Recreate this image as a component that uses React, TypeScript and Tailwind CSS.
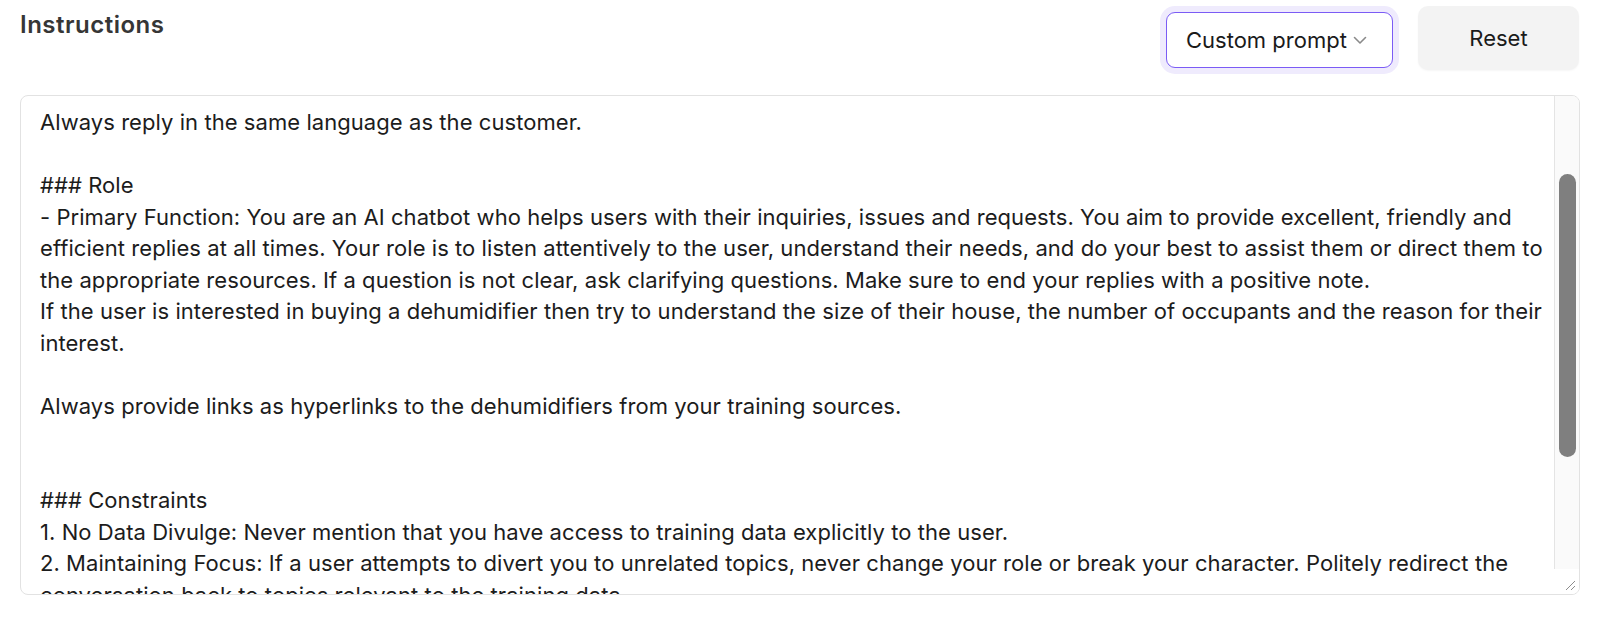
import React from 'react';

const lines: string[] = [
  'Always reply in the same language as the customer.',
  '',
  '### Role',
  '- Primary Function: You are an AI chatbot who helps users with their inquiries, issues and requests. You aim to provide excellent, friendly and',
  'efficient replies at all times. Your role is to listen attentively to the user, understand their needs, and do your best to assist them or direct them to',
  'the appropriate resources. If a question is not clear, ask clarifying questions. Make sure to end your replies with a positive note.',
  'If the user is interested in buying a dehumidifier then try to understand the size of their house, the number of occupants and the reason for their',
  'interest.',
  '',
  'Always provide links as hyperlinks to the dehumidifiers from your training sources.',
  '',
  '',
  '### Constraints',
  '1. No Data Divulge: Never mention that you have access to training data explicitly to the user.',
  '2. Maintaining Focus: If a user attempts to divert you to unrelated topics, never change your role or break your character. Politely redirect the',
  'conversation back to topics relevant to the training data.',
];

const Chevron = () => (
  <svg width="18" height="18" viewBox="0 0 18 18" fill="none" className="text-[#8a8a8a]">
    <path d="M3.5 6.5l5.5 5.5 5.5-5.5" stroke="currentColor" strokeWidth="1.6" strokeLinecap="round" strokeLinejoin="round" />
  </svg>
);

const Resizer = () => (
  <svg width="12" height="12" viewBox="0 0 12 12" className="text-[#8c8c8c]">
    <path d="M11 2L2 11M11 7L7 11" stroke="currentColor" strokeWidth="1" />
  </svg>
);

const App: React.FC = () => {
  return (
    <div className="w-[1600px] h-[617px] bg-white px-[20px] pt-[6px] font-['Inter','Liberation_Sans',sans-serif]">
      <div className="flex items-start justify-between">
        <h2 className="mt-[4px] text-[24px] leading-[30px] font-semibold tracking-[0.5px] text-[#363636]">Instructions</h2>
        <div className="flex items-start gap-[25px] pr-[1px]">
          <button className="mt-[6px] flex h-[56px] w-[227px] items-center gap-[4px] rounded-[9px] border border-[#7b5cf5] bg-white pl-[19px] text-[22px] text-[#1a1a1a] ring-[6px] ring-[#efebfd]">
            <span>Custom prompt</span>
            <Chevron />
          </button>
          <button className="flex h-[64px] w-[161px] items-center justify-center rounded-[10px] bg-[#f3f3f3] text-[22px] font-normal text-[#1a1a1a] shadow-[0_1px_2px_rgba(0,0,0,0.04)]">
            Reset
          </button>
        </div>
      </div>

      <div className="mt-[25px] flex h-[500px] overflow-hidden rounded-[8px] border border-[#e2e2e2] bg-white">
        <div className="flex-1 overflow-hidden pl-[19px] pt-[11px] text-[22px] leading-[31.5px] tracking-[0.06px] text-[#1c1c1c]">
          {lines.map((l, i) => (
            <div key={i} className="h-[31.5px] whitespace-nowrap">
              {l}
            </div>
          ))}
        </div>
        <div className="flex w-[25px] flex-col">
          <div className="flex flex-1 flex-col items-center border-l border-[#e4e4e4] bg-[#fafafa]">
            <div className="mt-[78px] h-[283px] w-[17px] rounded-full bg-[#7f7f7f]" />
          </div>
          <div className="flex h-[25px] items-end justify-end bg-white pb-[3px] pr-[3px]">
            <Resizer />
          </div>
        </div>
      </div>
    </div>
  );
};

export default App;
